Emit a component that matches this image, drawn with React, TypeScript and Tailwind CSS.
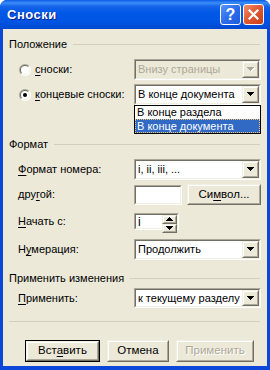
import React from "react";

function U({ children }: { children: React.ReactNode }) {
  return <span className="underline underline-offset-[2px] decoration-1">{children}</span>;
}

function Sunken({ className = "", children, disabled }: { className?: string; children?: React.ReactNode; disabled?: boolean }) {
  return (
    <div className={`border border-t-[#ACA899] border-l-[#ACA899] border-b-white border-r-white ${className}`}>
      <div className={`h-full border border-t-[#716F64] border-l-[#716F64] border-b-[#F1EFE2] border-r-[#F1EFE2] flex items-stretch ${disabled ? "bg-[#ECE9D8]" : "bg-white"}`}>
        {children}
      </div>
    </div>
  );
}

function Arrow({ up, disabled }: { up?: boolean; disabled?: boolean }) {
  const c = disabled ? "#ACA899" : "#000";
  const rows = up ? [[3, 1], [2, 3], [1, 5], [0, 7]] : [[0, 7], [1, 5], [2, 3], [3, 1]];
  return (
    <svg width="8" height="5" shapeRendering="crispEdges">
      {disabled &&
        rows.map(([x, w], i) => <rect key={"s" + i} x={x + 1} y={i + 1} width={w} height={1} fill="#fff" />)}
      {rows.map(([x, w], i) => (
        <rect key={i} x={x} y={i} width={w} height={1} fill={c} />
      ))}
    </svg>
  );
}

function Raised({ className = "", children }: { className?: string; children?: React.ReactNode }) {
  return (
    <div className={`border border-t-[#F1EFE2] border-l-[#F1EFE2] border-b-[#716F64] border-r-[#716F64] ${className}`}>
      <div className="h-full border border-t-white border-l-white border-b-[#ACA899] border-r-[#ACA899] bg-[#ECE9D8] flex items-center justify-center">
        {children}
      </div>
    </div>
  );
}

function Combo({ text, disabled, className = "" }: { text: string; disabled?: boolean; className?: string }) {
  return (
    <Sunken className={`w-[127px] h-[21px] shrink-0 ${className}`} disabled={disabled}>
      <div className={`flex-1 min-w-0 flex items-center pl-[2px] text-[11px] whitespace-nowrap overflow-hidden ${disabled ? "text-[#ACA899]" : "text-black"}`}>
        {text}
      </div>
      <Raised className="w-[17px] h-full shrink-0">
        <Arrow disabled={disabled} />
      </Raised>
    </Sunken>
  );
}

function Radio({ checked }: { checked?: boolean }) {
  return (
    <svg width="12" height="12" viewBox="0 0 12 12">
      <defs>
        <linearGradient id="ro" x1="0" y1="0" x2="1" y2="1">
          <stop offset="0.5" stopColor="#ACA899" />
          <stop offset="0.5" stopColor="#FFFFFF" />
        </linearGradient>
        <linearGradient id="ri" x1="0" y1="0" x2="1" y2="1">
          <stop offset="0.5" stopColor="#716F64" />
          <stop offset="0.5" stopColor="#F1EFE2" />
        </linearGradient>
      </defs>
      <circle cx="6" cy="6" r="6" fill="url(#ro)" />
      <circle cx="6" cy="6" r="5" fill="url(#ri)" />
      <circle cx="6" cy="6" r="4" fill="#fff" />
      {checked && <circle cx="6" cy="6" r="2" fill="#000" />}
    </svg>
  );
}

function GroupHeader({ title, className = "" }: { title: string; className?: string }) {
  return (
    <div className={`flex items-center h-[12px] pl-[6px] pr-[7px] gap-[6px] ${className}`}>
      <span className="leading-[12px] whitespace-nowrap">{title}</span>
      <div className="flex-1 flex flex-col">
        <div className="h-px bg-[#D0D0BF]" />
      </div>
    </div>
  );
}

function Button({ children, isDefault, disabled, className = "" }: { children: React.ReactNode; isDefault?: boolean; disabled?: boolean; className?: string }) {
  const inner = (
    <Raised className="h-full">
      <span className={`text-[11.5px] ${disabled ? "text-[#ACA899] [text-shadow:1px_1px_0_#fff]" : "text-black"}`}>{children}</span>
    </Raised>
  );
  return isDefault ? (
    <div className={`border border-black shrink-0 ${className}`}>{inner}</div>
  ) : (
    <div className={`shrink-0 ${className}`}>{inner}</div>
  );
}

export default function App() {
  return (
    <div className="w-[270px] h-[370px] bg-[#0B47D9] rounded-t-[7px] flex flex-col overflow-hidden font-['Liberation_Sans',Arial,sans-serif]">
      {/* title bar */}
      <div className="h-[29px] flex items-center pl-[7px] pr-[6px] bg-[linear-gradient(to_bottom,#0A5AE8_0%,#3C8DF7_10%,#1463EA_22%,#0058E6_45%,#0054E2_75%,#0049D0_100%)]">
        <span className="flex-1 text-white font-bold text-[13px] [text-shadow:1px_1px_0_#0A1E8C] tracking-[0.5px]">Сноски</span>
        <div className="flex gap-[2px]">
          <div className="w-[21px] h-[21px] rounded-[3px] border border-white bg-[linear-gradient(135deg,#5A95F8_0%,#2C6DEB_50%,#1E5BDC_100%)] flex items-center justify-center text-white font-bold text-[16px] leading-none">
            ?
          </div>
          <div className="w-[21px] h-[21px] rounded-[3px] border border-white bg-[linear-gradient(135deg,#F0906F_0%,#E15B34_45%,#C83D17_100%)] flex items-center justify-center">
            <svg width="11" height="11" viewBox="0 0 11 11">
              <path d="M1.5 1.5L9.5 9.5M9.5 1.5L1.5 9.5" stroke="#fff" strokeWidth="2.2" strokeLinecap="square" />
            </svg>
          </div>
        </div>
      </div>

      {/* body */}
      <div className="mx-[3px] mb-[4px] flex-1 bg-[#ECE9D8] relative flex flex-col text-[11px] text-black">
        <GroupHeader title="Положение" className="mt-[9px]" />

        <div className="flex items-center mt-[9px]">
          <div className="w-[131px] shrink-0 flex items-center pl-[16px] gap-[4px]">
            <Radio />
            <span><U>с</U>носки:</span>
          </div>
          <Combo text="Внизу страницы" disabled />
        </div>

        <div className="flex items-center mt-[4px]">
          <div className="w-[131px] shrink-0 flex items-center pl-[16px] gap-[4px]">
            <Radio checked />
            <span><U>к</U>онцевые сноски:</span>
          </div>
          <Combo text="В конце документа" />
        </div>

        <GroupHeader title="Формат" className="mt-[33px]" />

        <div className="flex items-center mt-[9px]">
          <div className="w-[131px] shrink-0 pl-[15px]"><U>Ф</U>ормат номера:</div>
          <Combo text="i, ii, iii, ..." />
        </div>

        <div className="flex items-center mt-[4px]">
          <div className="w-[131px] shrink-0 pl-[15px]">дру<U>г</U>ой:</div>
          <Sunken className="w-[48px] h-[20px] shrink-0" />
          <Button className="w-[74px] h-[21px] ml-[5px]">Си<U>м</U>вол...</Button>
        </div>

        <div className="flex items-center mt-[8px]">
          <div className="w-[131px] shrink-0 pl-[15px]"><U>Н</U>ачать с:</div>
          <Sunken className="w-[45px] h-[17px] shrink-0">
            <div className="flex-1 flex items-center pl-[2px] text-[12px]">i</div>
            <div className="w-[15px] flex flex-col">
              <Raised className="flex-1"><Arrow up /></Raised>
              <Raised className="flex-1"><Arrow /></Raised>
            </div>
          </Sunken>
        </div>

        <div className="flex items-center mt-[9px]">
          <div className="w-[131px] shrink-0 pl-[15px]">Н<U>у</U>мерация:</div>
          <Combo text="Продолжить" />
        </div>

        <GroupHeader title="Применить изменения" className="mt-[12px]" />

        <div className="flex items-center mt-[4px]">
          <div className="w-[131px] shrink-0 pl-[15px]"><U>П</U>рименить:</div>
          <Combo text="к текущему разделу" className="!h-[20px]" />
        </div>

        <div className="mt-[13px] mx-[6px] mr-[7px] flex flex-col">
          <div className="h-px bg-[#D0D0BF]" />
        </div>

        <div className="flex mt-[18px] pl-[22px] gap-[7px]">
          <Button isDefault className="w-[75px] h-[22px]">Вст<U>а</U>вить</Button>
          <Button className="w-[62px] h-[22px]">Отмена</Button>
          <Button disabled className="w-[78px] h-[22px]">Применить</Button>
        </div>

        {/* dropdown list */}
        <div className="absolute left-[131px] top-[76px] w-[127px] border border-black bg-white text-[11px] flex flex-col">
          <div className="h-[13px] leading-[13px] pl-[2px]">В конце раздела</div>
          <div className="h-[14px] leading-[12px] pl-[1px] bg-[#316AC5] text-white border border-dotted border-[#F3C26B]">В конце документа</div>
        </div>
      </div>
    </div>
  );
}
